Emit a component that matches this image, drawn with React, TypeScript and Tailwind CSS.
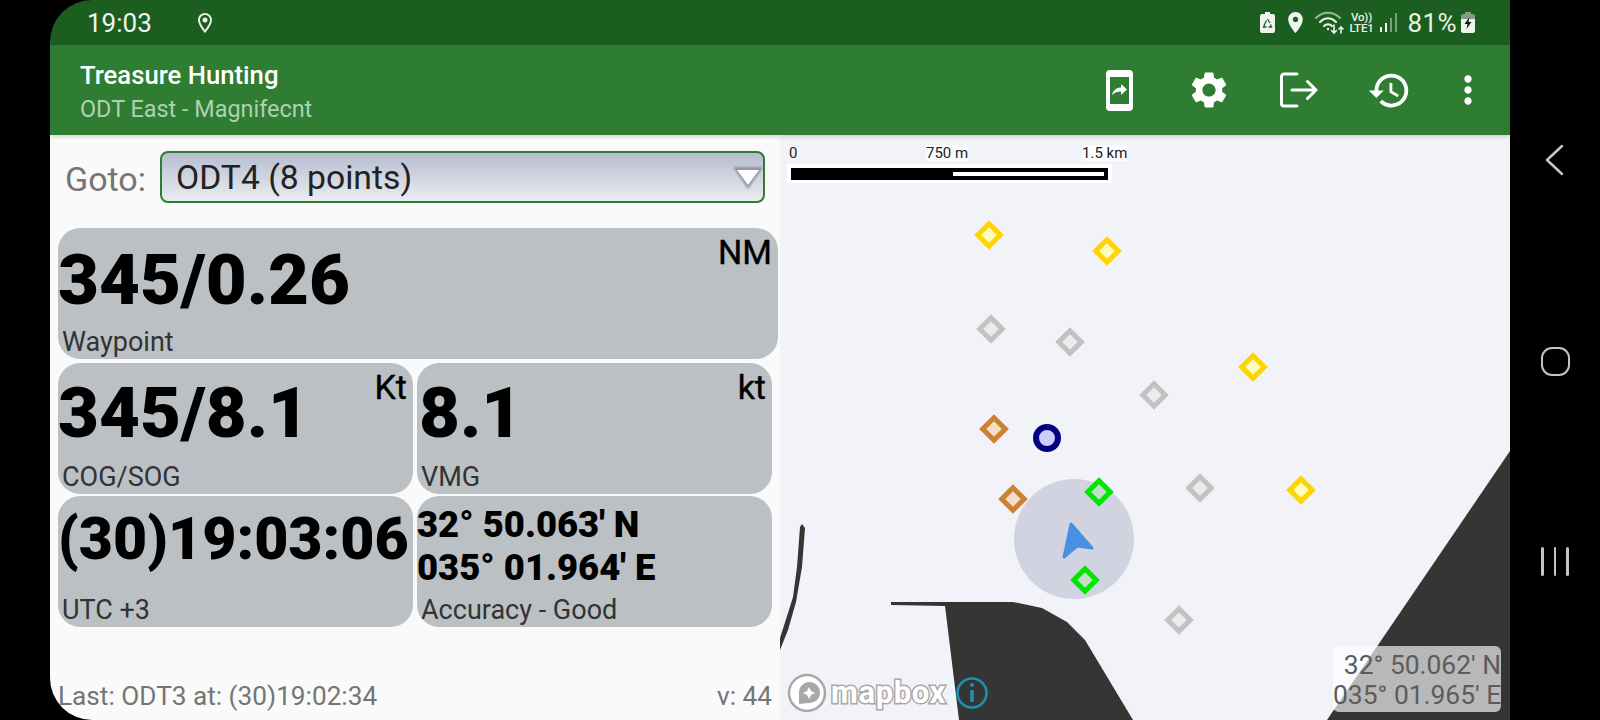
import { MdHistory, MdLocationOn, MdMoreVert, MdOutlineLocationOn, MdSettings } from 'react-icons/md';

const FONT = 'font-[Roboto,"Noto_Sans",sans-serif]';

interface DataCardProps {
  value?: string;
  unit?: string;
  label: string;
  className: string;
  valueClass?: string;
  children?: React.ReactNode;
}

function DataCard({ value, unit, label, className, valueClass, children }: DataCardProps) {
  return (
    <div className={`relative bg-[#bbc0c4] rounded-[22px] overflow-hidden ${className}`}>
      {children ?? <div className={`font-black text-black whitespace-nowrap ${valueClass}`}>{value}</div>}
      {unit && <div className="absolute right-[6px] top-[5px] text-[34px] leading-[38px] font-normal [-webkit-text-stroke:0.4px_#000] text-black">{unit}</div>}
      <div className="absolute left-[4px] bottom-[1px] text-[27px] leading-[32px] text-[#333] whitespace-nowrap">{label}</div>
    </div>
  );
}

function Diamond({ x, y, stroke, fill }: { x: number; y: number; stroke: string; fill: string }) {
  return <rect x={x - 8} y={y - 8} width="16" height="16" fill={fill} stroke={stroke} strokeWidth="5" transform={`rotate(45 ${x} ${y})`} />;
}

const YELLOW = [[989, 235], [1107, 251], [1253, 367], [1301, 490]];
const GRAY = [[991, 329], [1070, 342], [1154, 395], [1200, 488], [1179, 620]];
const ORANGE = [[994, 429], [1013, 499]];
const GREEN = [[1099, 492], [1085, 580]];

function MapView() {
  return (
    <div className="relative flex-1 bg-[#f1f3f9] overflow-hidden">
      <svg className="absolute inset-0" width="730" height="585" viewBox="780 135 730 585">
        <path d="M891 602 L1013 602 L1042 608 L1067 622 L1085 640 L1133 720 L959 720 L945 606 L891 605 Z" fill="#353533" />
        <path d="M802 524 L805 528 L802 567 L796 602 L788 630 L780 650 L780 638 L788 613 L793 597 L797 567 L800 527 Z" fill="#353533" />
        <path d="M1510 451 L1510 720 L1327 720 Z" fill="#353533" />
        <circle cx="1074" cy="539" r="60" fill="#d1d4e0" />
        <path d="M1071 524 L1092 548 L1077 546 L1064 557 Z" fill="#4a90e2" stroke="#4a90e2" strokeWidth="3" strokeLinejoin="round" />
        {YELLOW.map(([x, y]) => <Diamond key={x} x={x} y={y} stroke="#ffd400" fill="#fdfcbf" />)}
        {GRAY.map(([x, y]) => <Diamond key={x} x={x} y={y} stroke="#c2c2c2" fill="#ebebeb" />)}
        {ORANGE.map(([x, y]) => <Diamond key={x} x={x} y={y} stroke="#cd8232" fill="#f4dfcd" />)}
        {GREEN.map(([x, y]) => <Diamond key={x} x={x} y={y} stroke="#00e600" fill="#bfe0c4" />)}
        <circle cx="1047" cy="438" r="11" fill="#ccccff" stroke="#000080" strokeWidth="6" />

        {/* scale bar */}
        <rect x="787" y="164" width="325" height="19" fill="#fff" />
        <rect x="791" y="168" width="317" height="12" fill="#000" />
        <rect x="953" y="172" width="151" height="4" fill="#fff" />

        {/* mapbox logo */}
        <circle cx="807" cy="693" r="18" fill="#fff" stroke="#a8a8a8" strokeWidth="2.5" />
        <path d="M799 704 L799 693 A10.5 10.5 0 1 1 809 703 Z" fill="#a8a8a8" />
        <path d="M809 687 L811 691 L815 693 L811 695 L809 699 L807 695 L803 693 L807 691 Z" fill="#fff" />
        <circle cx="972" cy="693" r="14.5" fill="none" stroke="#1f8fb3" strokeWidth="2.5" />
        <circle cx="972" cy="685" r="2" fill="#1f8fb3" />
        <path d="M972 690 V702" stroke="#1f8fb3" strokeWidth="3.5" />
      </svg>

      <span className="absolute left-[9px] top-[10px] text-[15px] leading-[16px] text-[#222]">0</span>
      <span className="absolute left-[146px] top-[10px] bg-white/70 text-[15px] leading-[16px] text-[#222] whitespace-nowrap">750 m</span>
      <span className="absolute left-[302px] top-[10px] bg-white/70 text-[15px] leading-[16px] text-[#222] whitespace-nowrap">1.5 km</span>

      <span className="absolute left-[51px] top-[534px] text-[31px] leading-[48px] font-bold tracking-[0.6px] text-white [paint-order:stroke_fill] [-webkit-text-stroke:3px_#a8a8a8]">mapbox</span>

      <div className="absolute left-[553px] top-[511px] w-[168px] h-[66px] bg-white/65 rounded-[6px] text-[26.400px] leading-[30px] text-[#5c5c5c] text-right whitespace-nowrap pt-[4px]">
        <div>32° 50.062' N</div>
        <div>035° 01.965' E</div>
      </div>
    </div>
  );
}

function StatusBar() {
  return (
    <div className="h-[45px] bg-[#1b5e20] flex items-center text-white shrink-0">
      <span className="ml-[37px] text-[26px] leading-[30px] text-[#eef4ee]">19:03</span>
      <MdOutlineLocationOn className="ml-[41px] text-[#e6efe6]" size={24} />
      <div className="ml-auto mr-[35px] flex items-center text-[#e8f0e8]">
        <svg width="15" height="21" viewBox="0 0 15 21">
          <path d="M5 0 H10 V2 H13 A2 2 0 0 1 15 4 V19 A2 2 0 0 1 13 21 H2 A2 2 0 0 1 0 19 V4 A2 2 0 0 1 2 2 H5 Z" fill="#eef4ee" />
          <path d="M7.5 7 L10 11 M10.5 12.5 L11.5 15 H8.5 M6.5 15 H3.5 L5 11.5 L6.5 8.5" fill="none" stroke="#1b5e20" strokeWidth="1.3" />
        </svg>
        <MdLocationOn className="ml-[8px]" size={25} color="#eef4ee" />
        <svg className="ml-[7px]" width="31" height="24" viewBox="0 0 31 24" fill="none" stroke="#eef4ee" strokeLinecap="round">
          <path d="M1 7 C8 0 18 0 25 7" strokeWidth="2" opacity="0.6" />
          <path d="M5 11 C10 6 16 6 21 11" strokeWidth="2" />
          <path d="M9 15 C11.500 12.500 14.500 12.500 17 15" strokeWidth="2" />
          <circle cx="13" cy="18" r="1.2" fill="#eef4ee" stroke="none" />
          <path d="M19 14 V22 M16.500 19.500 L19 22 L21.500 19.500 M26 22 V16 M24 18 L26 16 L28 18" strokeWidth="1.6" />
        </svg>
        <div className="ml-[3px] w-[26px] text-center text-[11.500px] leading-[11px] font-medium tracking-[-0.2px]">
          <div>Vo))</div>
          <div>LTE1</div>
        </div>
        <svg className="ml-[5px]" width="18" height="21" viewBox="0 0 18 21" fill="#eef4ee">
          <rect x="0" y="15" width="2" height="5" />
          <rect x="5" y="11" width="2" height="9" />
          <rect x="10" y="6" width="2" height="14" opacity="0.45" />
          <rect x="15" y="1" width="2" height="19" opacity="0.45" />
        </svg>
        <span className="ml-[10px] text-[26px] leading-[30px] tracking-[0.4px]">81%</span>
        <svg className="ml-[4px]" width="14" height="21" viewBox="0 0 14 21">
          <path d="M4 0 H10 V2 H12 A2 2 0 0 1 14 4 V7 H0 V4 A2 2 0 0 1 2 2 H4 Z" fill="#7f9f82" />
          <path d="M0 7 H14 V19 A2 2 0 0 1 12 21 H2 A2 2 0 0 1 0 19 Z" fill="#eef4ee" />
          <path d="M8.500 5 L3.500 12 H6.500 L5.500 17 L10.500 10 H7.500 Z" fill="#1a1a1a" />
        </svg>
      </div>
    </div>
  );
}

function AppBar() {
  return (
    <div className="relative z-10 h-[90px] bg-[#2e7d32] flex items-center shrink-0 shadow-[0_2px_4px_rgba(0,0,0,0.15)]">
      <div className="ml-[30px] mt-[4px]">
        <div className="text-[25.700px] leading-[30px] font-medium text-white">Treasure Hunting</div>
        <div className="mt-[4px] text-[23.400px] leading-[30px] text-[#b0d0b2]">ODT East - Magnifecnt</div>
      </div>
      <div className="ml-auto flex items-center text-white">
        <svg width="27" height="41" viewBox="0 0 27 41">
          <rect width="27" height="41" rx="4" fill="#fff" />
          <rect x="4" y="7" width="19" height="27" fill="#2e7d32" />
          <path d="M6 25 C7 20 11 17.500 15 17.500 V14 L21 19.500 L15 25 V21.500 C11.500 21.500 8.500 22.500 6 25 Z" fill="#fff" />
        </svg>
        <MdSettings className="ml-[54px]" size={44} />
        <svg className="ml-[49px]" width="38" height="36" viewBox="0 0 38 36" fill="none" stroke="#fff" strokeWidth="3" strokeLinecap="round" strokeLinejoin="round">
          <path d="M17 2 H4 A2.500 2.500 0 0 0 1.500 4.500 V31.500 A2.500 2.500 0 0 0 4 34 H17" />
          <path d="M12 18 H36 M27.500 9.500 L36 18 L27.500 26.500" />
        </svg>
        <MdHistory className="ml-[49px]" size={45} />
        <MdMoreVert className="ml-[34px] mr-[20px]" size={44} />
      </div>
    </div>
  );
}

export default function App() {
  return (
    <div className={`w-[1600px] h-[720px] bg-black flex overflow-hidden ${FONT}`}>
      <div className="ml-[50px] w-[1460px] h-full rounded-l-[42px] overflow-hidden flex flex-col">
        <StatusBar />
        <AppBar />
        <div className="flex-1 flex min-h-0">
          {/* left panel */}
          <div className="relative w-[730px] bg-[#fafafa] pl-[8px] flex flex-col">
            <div className="h-[93px] flex items-start pt-[16px]">
              <span className="ml-[7px] w-[95px] text-[34px] leading-[56px] text-[#757575]">Goto:</span>
              <div className="w-[605px] h-[52px] rounded-[8px] border-2 border-[#2e7d32] bg-gradient-to-b from-[#b6bdcf] to-[#eaedf0] flex items-center justify-between pl-[14px]">
                <span className="text-[33.700px] leading-[44px] pt-[2px] text-[#222]">ODT4 (8 points)</span>
                <svg width="30" height="26" viewBox="0 0 30 26">
                  <path className="blur-[1px]" d="M0 3 H30 L15 25 Z" fill="#8f949e" />
                  <path d="M4 6 H26 L15 21 Z" fill="#fff" />
                </svg>
              </div>
            </div>

            <DataCard value="345/0.26" unit="NM" label="Waypoint" className="w-[720px] h-[131px]" valueClass="text-[70.700px] leading-[84px] pt-[10px]" />

            <div className="mt-[4px] flex gap-[4px]">
              <DataCard value="345/8.1" unit="Kt" label="COG/SOG" className="w-[355px] h-[131px]" valueClass="text-[70.700px] leading-[84px] pt-[8px]" />
              <DataCard value="8.1" unit="kt" label="VMG" className="w-[355px] h-[131px]" valueClass="text-[70.700px] leading-[84px] pt-[8px] pl-[2px]" />
            </div>

            <div className="mt-[2px] flex gap-[4px]">
              <DataCard value="(30)19:03:06" label="UTC +3" className="w-[355px] h-[131px]" valueClass="text-[59px] leading-[72px] pt-[7px]" />
              <DataCard label="Accuracy - Good" className="w-[355px] h-[131px]">
                <div className="pt-[7px] text-[36.400px] leading-[43px] font-black text-black whitespace-nowrap">
                  <div>32° 50.063' N</div>
                  <div>035° 01.964' E</div>
                </div>
              </DataCard>
            </div>

            <div className="mt-auto mb-[9px] pr-[8px] flex items-center justify-between text-[26.200px] leading-[30px] text-[#757575]">
              <span>Last: ODT3 at: (30)19:02:34</span>
              <span>v: 44</span>
            </div>
          </div>

          <MapView />
        </div>
      </div>

      {/* android nav */}
      <div className="flex-1 flex flex-col items-center justify-center gap-[171px]">
        <svg width="20" height="32" viewBox="0 0 20 32" fill="none" stroke="#c4c4c4" strokeWidth="2.500" strokeLinecap="round" strokeLinejoin="round">
          <path d="M17 2 L2 16 L17 30" />
        </svg>
        <div className="w-[29px] h-[29px] rounded-[11px] border-[2.5px] border-[#c4c4c4]" />
        <div className="flex gap-[10px]">
          <div className="w-[2.500px] h-[29px] bg-[#c4c4c4] rounded-full" />
          <div className="w-[2.500px] h-[29px] bg-[#c4c4c4] rounded-full" />
          <div className="w-[2.500px] h-[29px] bg-[#c4c4c4] rounded-full" />
        </div>
      </div>
    </div>
  );
}
